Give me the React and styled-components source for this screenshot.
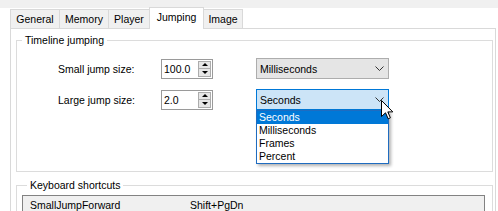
import React from "react";
import styled, { createGlobalStyle } from "styled-components";

const GlobalStyle = createGlobalStyle`
  html, body {
    margin: 0;
    padding: 0;
    background: #fff;
  }
  body {
    width: 498px;
    height: 211px;
    overflow: hidden;
    font-family: "Liberation Sans", Arial, sans-serif;
    font-size: 10.5px;
    color: #000;
  }
  * { box-sizing: border-box; }
`;

const Window = styled.div`
  display: flex;
  flex-direction: column;
  width: 498px;
  height: 211px;
  overflow: hidden;
`;

const TopBand = styled.div`
  flex-shrink: 0;
  height: 8px;
  background: #f0f0f0;
`;

const TabStrip = styled.div`
  flex-shrink: 0;
  display: flex;
  align-items: flex-end;
  height: 20px;
  padding-left: 10px;
`;

const Tab = styled.div`
  display: flex;
  align-items: ${(p) => (p.$active ? "flex-start" : "center")};
  justify-content: center;
  width: ${(p) => p.$w}px;
  height: ${(p) => (p.$active ? "22px" : "19px")};
  margin-bottom: ${(p) => (p.$active ? "-1px" : "0")};
  padding-top: ${(p) => (p.$active ? "3px" : "0")};
  margin-left: -1px;
  border: 1px solid #d9d9d9;
  border-bottom: none;
  background: ${(p) => (p.$active ? "#fff" : "#f0f0f0")};
  position: relative;
  z-index: ${(p) => (p.$active ? 2 : 0)};
  &:first-child { margin-left: 0; }
`;

const Panel = styled.div`
  flex: 1;
  min-height: 0;
  overflow: hidden;
  margin: 0 2px 0 10px;
  border: 1px solid #d9d9d9;
  border-bottom: none;
  padding: 4px 2px 0 5px;
  background: #fff;
`;

const Group = styled.fieldset`
  margin: ${(p) => p.$margin || "0"};
  border: 1px solid #dcdcdc;
  padding: ${(p) => p.$pad};
  min-width: 0;
`;

const Legend = styled.legend`
  margin-left: 5px;
  padding: 0 3px;
  line-height: 14px;
`;

const Rows = styled.div`
  display: grid;
  grid-template-columns: 103px 95px 133px;
  grid-auto-rows: 21px;
  row-gap: 10px;
  padding-left: 41px;
  align-items: center;
`;

const Label = styled.span`
  line-height: 14px;
`;

const NumBox = styled.div`
  display: flex;
  align-items: center;
  justify-content: space-between;
  width: 52px;
  height: 20px;
  border: 1px solid #9a9a9a;
  padding: 0 1px 0 2px;
  background: #fff;
`;

const Spinner = styled.div`
  display: flex;
  flex-direction: column;
  width: 13px;
  height: 16px;
`;

const SpinBtn = styled.div`
  flex: 1;
  display: flex;
  align-items: center;
  justify-content: center;
  border: 1px solid #acacac;
  background: #e6e6e6;
  & + & { border-top: none; }
  &::after {
    content: "";
    border-left: 3px solid transparent;
    border-right: 3px solid transparent;
    ${(p) =>
      p.$up
        ? "border-bottom: 3px solid #000;"
        : "border-top: 3px solid #000;"}
  }
`;

const Combo = styled.div`
  position: relative;
  display: flex;
  align-items: center;
  justify-content: space-between;
  width: 133px;
  height: 21px;
  padding: 0 4px 0 3px;
  border: 1px solid ${(p) => (p.$open ? "#0078d7" : "#adadad")};
  background: ${(p) => (p.$open ? "#cce4f7" : "#e5e5e5")};
`;

const DropList = styled.div`
  position: absolute;
  top: calc(100% + 1px);
  left: -1px;
  width: 133px;
  border: 1px solid #1f6cc0;
  background: #fff;
  box-shadow: 2px 2px 3px rgba(0, 0, 0, 0.3);
  z-index: 3;
`;

const Item = styled.div`
  height: 13px;
  line-height: 13px;
  padding-left: 2px;
  background: ${(p) => (p.$selected ? "#0078d7" : "transparent")};
  color: ${(p) => (p.$selected ? "#fff" : "#000")};
`;

const Cursor = styled.svg`
  position: absolute;
  left: 124px;
  top: 10px;
  z-index: 4;
`;

const ListView = styled.div`
  height: 40px;
  border: 1px solid #828282;
  background: #f0f0f0;
`;

const ListRow = styled.div`
  display: grid;
  grid-template-columns: 160px auto;
  padding: 2px 0 0 7px;
  line-height: 14px;
`;

const Chevron = () => (
  <svg width="9" height="5" viewBox="0 0 9 5">
    <polyline points="0.5,0.5 4.5,4.5 8.5,0.5" fill="none" stroke="#333" strokeWidth="1" />
  </svg>
);

const NumField = ({ value }) => (
  <NumBox>
    <span>{value}</span>
    <Spinner>
      <SpinBtn $up />
      <SpinBtn />
    </Spinner>
  </NumBox>
);

const tabs = [
  { label: "General", w: 50 },
  { label: "Memory", w: 50 },
  { label: "Player", w: 42 },
  { label: "Jumping", w: 55 },
  { label: "Image", w: 40 },
];
const units = ["Seconds", "Milliseconds", "Frames", "Percent"];

export default function App() {
  return (
    <Window>
      <GlobalStyle />
      <TopBand />
      <TabStrip>
        {tabs.map((t) => (
          <Tab key={t.label} $w={t.w} $active={t.label === "Jumping"}>
            {t.label}
          </Tab>
        ))}
      </TabStrip>
      <Panel>
        <Group $pad="11px 0 61px 0">
          <Legend>Timeline jumping</Legend>
          <Rows>
            <Label>Small jump size:</Label>
            <NumField value="100.0" />
            <Combo>
              <span>Milliseconds</span>
              <Chevron />
            </Combo>
            <Label>Large jump size:</Label>
            <NumField value="2.0" />
            <Combo $open>
              <span>Seconds</span>
              <Chevron />
              <DropList>
                {units.map((u) => (
                  <Item key={u} $selected={u === "Seconds"}>
                    {u}
                  </Item>
                ))}
              </DropList>
              <Cursor width="13" height="20" viewBox="0 0 13 20">
                <path
                  d="M0.5 0.5 L0.5 16.5 L4.5 12.8 L7.2 18.8 L9.4 17.8 L6.8 11.9 L11.8 11.9 Z"
                  fill="#fff"
                  stroke="#000"
                  strokeWidth="1"
                  strokeLinejoin="miter"
                />
              </Cursor>
            </Combo>
          </Rows>
        </Group>
        <Group $margin="6px 0 0 0" $pad="3px 7px 0 5px">
          <Legend>Keyboard shortcuts</Legend>
          <ListView>
            <ListRow>
              <span>SmallJumpForward</span>
              <span>Shift+PgDn</span>
            </ListRow>
          </ListView>
        </Group>
      </Panel>
    </Window>
  );
}
